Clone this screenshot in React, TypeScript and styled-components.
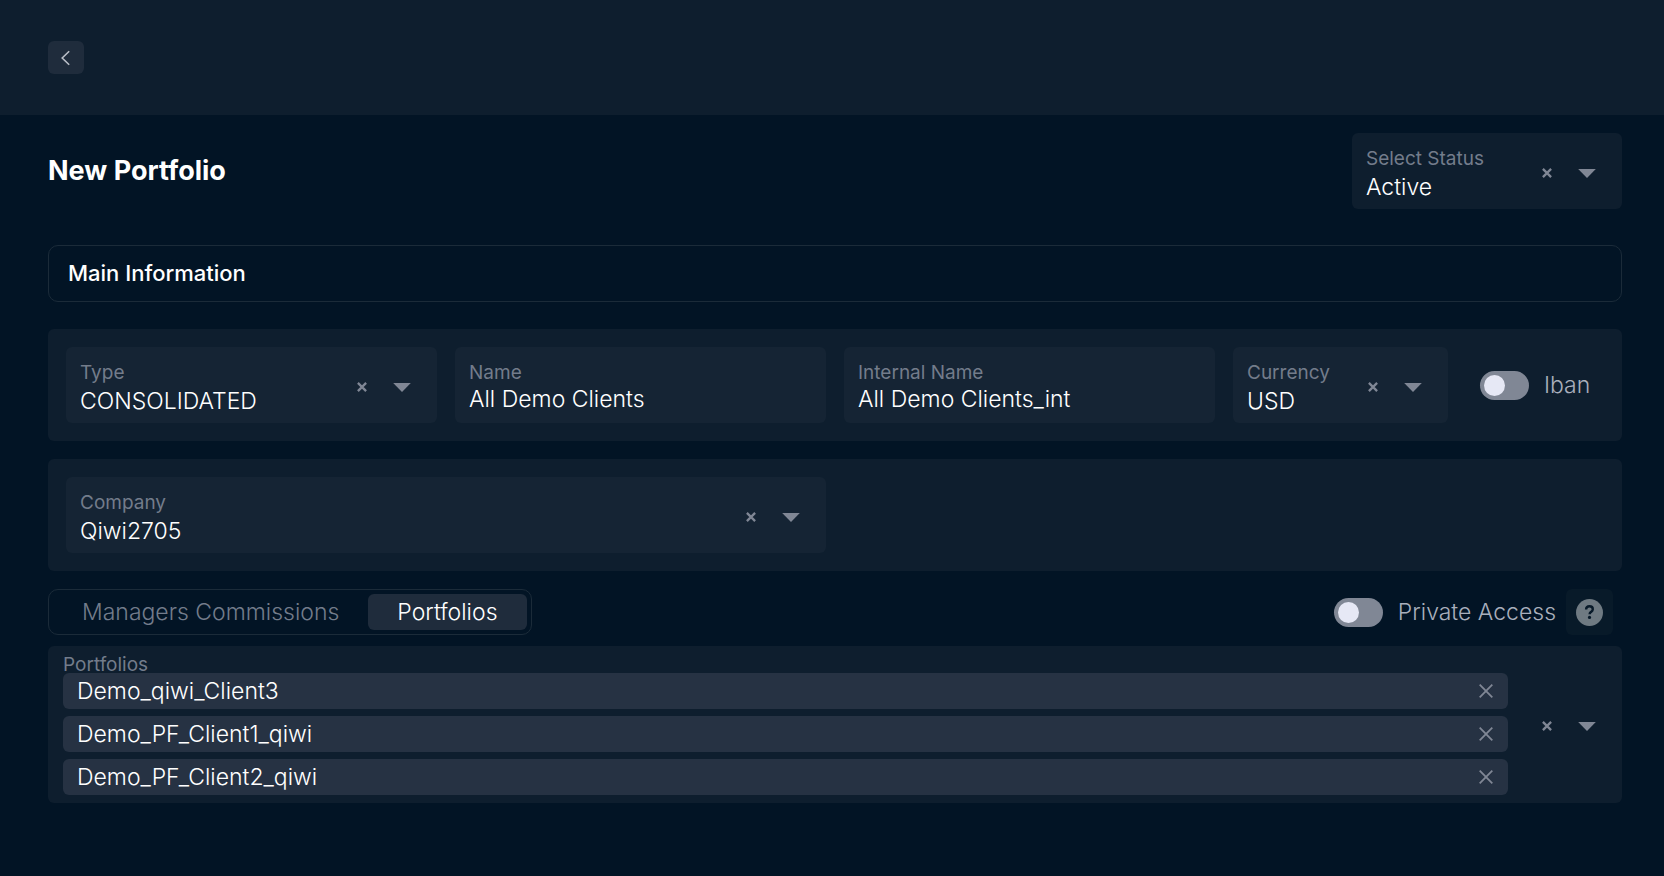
import React, { useId, useState } from "react";
import styled, { createGlobalStyle } from "styled-components";

const color = {
  page: "#021425",
  panel: "#0e1e2e",
  field: "#152434",
  raised: "#1f2c3c",
  chip: "#263243",
  line: "#1b2b39",
  label: "#737c8b",
  icon: "#808795",
  soft: "#a9afbc",
  text: "#ffffff",
};

const GlobalStyle = createGlobalStyle`
  *, *::before, *::after { box-sizing: border-box; }
  body {
    margin: 0;
    background: ${color.page};
    color: ${color.text};
    font-family: Inter, "Liberation Sans", sans-serif;
    font-size: 23px;
    font-weight: 300;
  }
  button, input, select {
    margin: 0;
    padding: 0;
    border: 0;
    background: none;
    color: inherit;
    font: inherit;
  }
  button { cursor: pointer; }
`;

const Page = styled.div`
  min-height: 100vh;
  background: ${color.page};
`;

const Header = styled.header`
  display: flex;
  align-items: center;
  height: 115px;
  padding: 0 48px;
  background: ${color.panel};
`;

const BackButton = styled.button`
  display: flex;
  align-items: center;
  justify-content: center;
  width: 36px;
  height: 33px;
  border-radius: 6px;
  background: ${color.raised};
  color: #b9bec7;
`;

const Main = styled.main`
  display: flex;
  flex-direction: column;
  padding: 18px 42px 48px 48px;
`;

const TitleRow = styled.div`
  display: flex;
  align-items: center;
  justify-content: space-between;
`;

const Title = styled.h1`
  margin: 0;
  font-size: 27px;
  line-height: 32px;
  font-weight: 700;
`;

const SectionTitle = styled.h2`
  margin: 36px 0 27px;
  padding: 0 19px;
  border: 1px solid ${color.line};
  border-radius: 10px;
  font-size: 22px;
  line-height: 55px;
  font-weight: 500;
`;

const Panels = styled.div`
  display: flex;
  flex-direction: column;
  gap: 18px;
`;

const Panel = styled.div`
  display: grid;
  grid-template-columns: repeat(3, minmax(0, 371fr)) minmax(0, 215fr) minmax(0, 138fr);
  gap: 18px;
  padding: 18px;
  border-radius: 6px;
  background: ${color.panel};
`;

const FieldBox = styled.div<{ $tone?: string; $span?: number; $width?: number }>`
  display: flex;
  align-items: center;
  height: 76px;
  padding: 4px 26px 0 14px;
  border-radius: 6px;
  background: ${(p) => p.$tone ?? color.field};
  grid-column: span ${(p) => p.$span ?? 1};
  ${(p) => (p.$width ? `width: ${p.$width}px;` : "")}
`;

const FieldText = styled.div`
  display: flex;
  flex: 1;
  flex-direction: column;
  min-width: 0;
`;

const FieldLabel = styled.label`
  color: ${color.label};
  font-size: 19px;
  font-weight: 400;
  line-height: 28px;
`;

const TextInput = styled.input`
  width: 100%;
  height: 28px;
  padding-bottom: 4px;
  outline: none;
`;

const Select = styled.select`
  width: 100%;
  height: 28px;
  line-height: 28px;
  appearance: none;
  outline: none;
`;

const Actions = styled.div`
  display: flex;
  align-items: center;
  gap: 22px;
  color: ${color.icon};
`;

const IconButton = styled.button`
  display: flex;
  align-items: center;
  justify-content: center;
  width: 18px;
  height: 24px;
  color: ${color.icon};
`;

const SwitchLabel = styled.label<{ $inset?: boolean }>`
  display: flex;
  align-items: center;
  gap: 15px;
  padding-left: ${(p) => (p.$inset ? 14 : 0)}px;
  color: ${color.soft};
  white-space: nowrap;
  cursor: pointer;
`;

const Switch = styled.input`
  display: flex;
  align-items: center;
  flex: none;
  width: 49px;
  height: 29px;
  padding: 0 4px;
  border-radius: 15px;
  background: ${color.icon};
  appearance: none;
  cursor: pointer;

  &::before {
    content: "";
    width: 21px;
    height: 21px;
    border-radius: 50%;
    background: #e6e8f5;
  }
  &:checked {
    justify-content: flex-end;
  }
`;

const TabRow = styled.div`
  display: flex;
  align-items: center;
  justify-content: space-between;
  margin-bottom: 11px;
  padding-right: 9px;
`;

const TabList = styled.div`
  display: flex;
  padding: 4px;
  border: 1px solid ${color.line};
  border-radius: 10px;
`;

const Tab = styled.button<{ $active: boolean }>`
  height: 36px;
  padding: 0 29px;
  border-radius: 6px;
  background: ${(p) => (p.$active ? color.raised : "transparent")};
  color: ${(p) => (p.$active ? color.text : color.label)};
`;

const Access = styled.div`
  display: flex;
  align-items: center;
  gap: 10px;
`;

const HelpButton = styled.button`
  display: flex;
  align-items: center;
  justify-content: center;
  width: 47px;
  height: 46px;
  border-radius: 6px;
  background: #081a29;
`;

const MultiSelect = styled.section`
  display: flex;
  align-items: center;
  gap: 30px;
  padding: 11px 26px 8px 15px;
  border-radius: 6px;
  background: ${color.panel};
`;

const MultiBody = styled.div`
  flex: 1;
  min-width: 0;
`;

const MultiLabel = styled.h3`
  margin: 0;
  color: ${color.label};
  font-size: 19px;
  line-height: 16px;
  font-weight: 400;
`;

const ChipList = styled.ul`
  display: flex;
  flex-direction: column;
  gap: 7px;
  margin: 0;
  padding: 0;
  list-style: none;
`;

const Chip = styled.li`
  display: flex;
  align-items: center;
  justify-content: space-between;
  height: 36px;
  padding: 0 13px 0 14px;
  border-radius: 6px;
  background: ${color.chip};
`;

const ClearIcon = () => (
  <svg width="10" height="10" viewBox="0 0 10 10" fill="none" stroke="currentColor" strokeWidth="2.3" aria-hidden="true">
    <path d="M0.9 0.9 9.1 9.1M9.1 0.9 0.9 9.1" />
  </svg>
);

const CaretIcon = () => (
  <svg width="18" height="9" viewBox="0 0 18 9" fill="currentColor" aria-hidden="true">
    <path d="M0.2 0h17.6L9 9z" />
  </svg>
);

const RemoveIcon = () => (
  <svg width="14" height="14" viewBox="0 0 14 14" fill="none" stroke="currentColor" strokeWidth="1.8" aria-hidden="true">
    <path d="M0.7 0.7 13.3 13.3M13.3 0.7 0.7 13.3" />
  </svg>
);

const BackIcon = () => (
  <svg width="10" height="16" viewBox="0 0 10 16" fill="none" stroke="currentColor" strokeWidth="1.6" aria-hidden="true">
    <path d="M8.2 1.2 1.2 8l7 6.8" />
  </svg>
);

const HelpIcon = () => (
  <svg width="27" height="27" viewBox="0 0 27 27" aria-hidden="true">
    <circle cx="13.5" cy="13.5" r="13.5" fill="#6f7a82" />
    <path
      d="M10.1 10.6c0-2 1.4-3.3 3.4-3.3s3.3 1.2 3.3 2.9c0 1.3-.7 2-1.7 2.7-1 .6-1.5 1.1-1.5 2.4"
      fill="none"
      stroke="#081a29"
      strokeWidth="2.4"
    />
    <circle cx="13.5" cy="18.4" r="1.6" fill="#081a29" />
  </svg>
);

type SelectFieldProps = {
  label: string;
  options: string[];
  tone?: string;
  span?: number;
  width?: number;
};

function SelectField({ label, options, tone, span, width }: SelectFieldProps) {
  const id = useId();
  const [value, setValue] = useState(options[0]);
  return (
    <FieldBox $tone={tone} $span={span} $width={width}>
      <FieldText>
        <FieldLabel htmlFor={id}>{label}</FieldLabel>
        <Select id={id} value={value} onChange={(e) => setValue(e.target.value)}>
          <option value="" hidden />
          {options.map((o) => (
            <option key={o}>{o}</option>
          ))}
        </Select>
      </FieldText>
      <Actions>
        <IconButton type="button" aria-label={`Clear ${label}`} onClick={() => setValue("")}>
          <ClearIcon />
        </IconButton>
        <CaretIcon />
      </Actions>
    </FieldBox>
  );
}

function TextField({ label, initial }: { label: string; initial: string }) {
  const id = useId();
  return (
    <FieldBox>
      <FieldText>
        <FieldLabel htmlFor={id}>{label}</FieldLabel>
        <TextInput id={id} type="text" defaultValue={initial} />
      </FieldText>
    </FieldBox>
  );
}

const tabs = ["Managers Commissions", "Portfolios"];

export default function App() {
  const [tab, setTab] = useState("Portfolios");
  const [portfolios, setPortfolios] = useState([
    "Demo_qiwi_Client3",
    "Demo_PF_Client1_qiwi",
    "Demo_PF_Client2_qiwi",
  ]);

  return (
    <Page>
      <GlobalStyle />
      <Header>
        <BackButton type="button" aria-label="Back">
          <BackIcon />
        </BackButton>
      </Header>
      <Main>
        <TitleRow>
          <Title>New Portfolio</Title>
          <SelectField label="Select Status" options={["Active"]} tone={color.panel} width={270} />
        </TitleRow>
        <SectionTitle>Main Information</SectionTitle>
        <Panels>
          <Panel>
            <SelectField label="Type" options={["CONSOLIDATED"]} />
            <TextField label="Name" initial="All Demo Clients" />
            <TextField label="Internal Name" initial="All Demo Clients_int" />
            <SelectField label="Currency" options={["USD"]} />
            <SwitchLabel $inset>
              <Switch type="checkbox" />
              Iban
            </SwitchLabel>
          </Panel>
          <Panel>
            <SelectField label="Company" options={["Qiwi2705"]} span={2} />
          </Panel>
          <div>
            <TabRow>
              <TabList role="tablist">
                {tabs.map((name) => (
                  <Tab
                    key={name}
                    type="button"
                    role="tab"
                    aria-selected={tab === name}
                    $active={tab === name}
                    onClick={() => setTab(name)}
                  >
                    {name}
                  </Tab>
                ))}
              </TabList>
              <Access>
                <SwitchLabel>
                  <Switch type="checkbox" />
                  Private Access
                </SwitchLabel>
                <HelpButton type="button" aria-label="Help">
                  <HelpIcon />
                </HelpButton>
              </Access>
            </TabRow>
            <MultiSelect aria-labelledby="portfolios-label">
              <MultiBody>
                <MultiLabel id="portfolios-label">Portfolios</MultiLabel>
                <ChipList>
                  {portfolios.map((name) => (
                    <Chip key={name}>
                      {name}
                      <IconButton
                        type="button"
                        aria-label={`Remove ${name}`}
                        onClick={() => setPortfolios(portfolios.filter((p) => p !== name))}
                      >
                        <RemoveIcon />
                      </IconButton>
                    </Chip>
                  ))}
                </ChipList>
              </MultiBody>
              <Actions>
                <IconButton type="button" aria-label="Clear portfolios" onClick={() => setPortfolios([])}>
                  <ClearIcon />
                </IconButton>
                <IconButton type="button" aria-label="Open portfolios">
                  <CaretIcon />
                </IconButton>
              </Actions>
            </MultiSelect>
          </div>
        </Panels>
      </Main>
    </Page>
  );
}
